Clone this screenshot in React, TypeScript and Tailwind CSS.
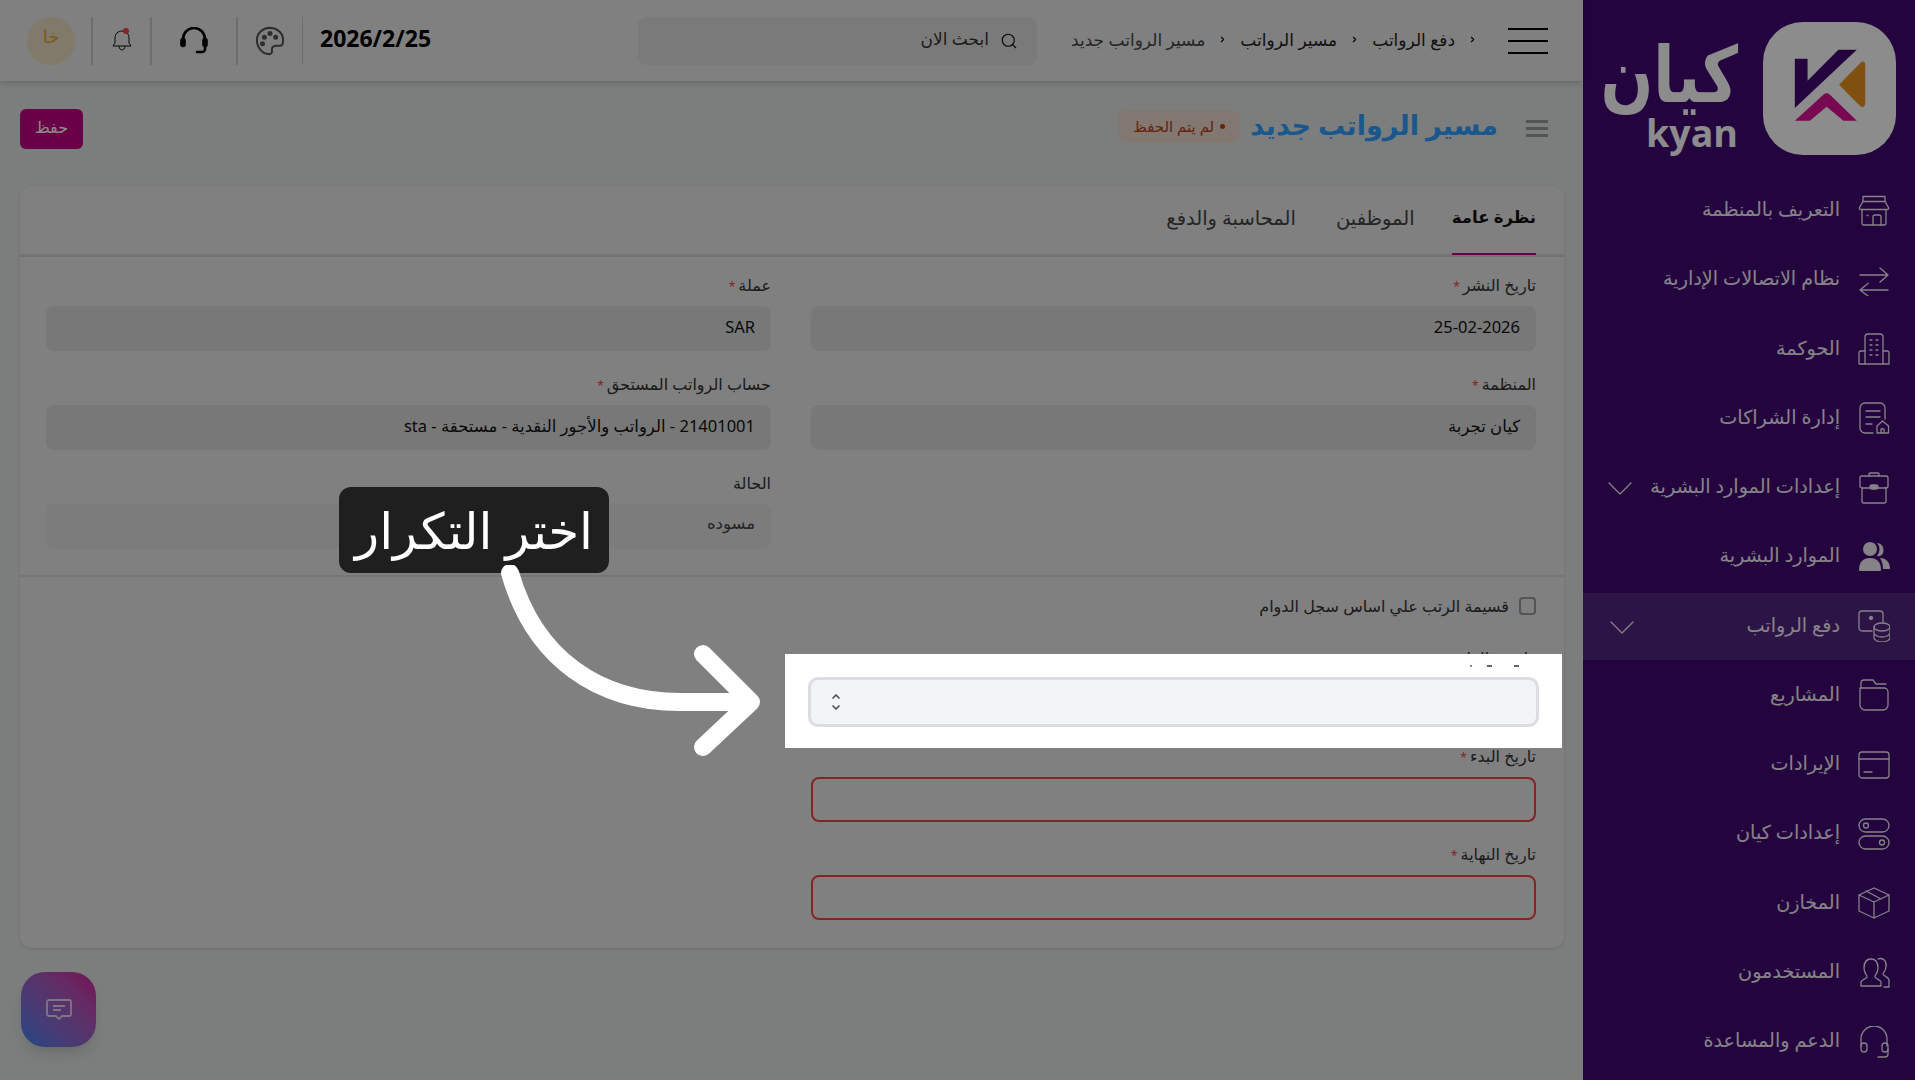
import React from 'react';
import { ChevronRight, Search } from 'lucide-react';

function Ico({ children }: { children: React.ReactNode }) {
  return (
    <svg viewBox="0 0 32 32" className="w-8 h-8 shrink-0 text-[#f2eef4]" fill="none" stroke="currentColor" strokeWidth="1.3" strokeLinecap="round" strokeLinejoin="round">
      {children}
    </svg>
  );
}

const navItems: { label: string; icon: React.ReactNode; chevron?: boolean; active?: boolean }[] = [
  {
    label: 'التعريف بالمنظمة',
    icon: (
      <Ico>
        <path d="M5 1.5h22v5H5z" />
        <path d="M5 6.5 1.5 12.5Q1 14.5 3 14.5H29Q31 14.5 30.5 12.5L27 6.5" />
        <path d="M4 14.5V28a2 2 0 0 0 2 2h20a2 2 0 0 0 2-2V14.5" />
        <path d="M15 30v-8a2 2 0 0 1 2-2h4a2 2 0 0 1 2 2v8M9 20.5h1" />
      </Ico>
    ),
  },
  {
    label: 'نظام الاتصالات الإدارية',
    icon: (
      <Ico>
        <path d="M2 11H30M22 4l8 7-8 7" />
        <path d="M30 26H2M10 19.500l-8 6.500 8 6" />
      </Ico>
    ),
  },
  {
    label: 'الحوكمة',
    icon: (
      <Ico>
        <path d="M7 31V4a3 3 0 0 1 3-3h12a3 3 0 0 1 3 3v27" />
        <path d="M7 18H3a2 2 0 0 0-2 2v11h30V20a2 2 0 0 0-2-2h-4" />
        <path d="M12 7h2M18 7h2M12 12h2M18 12h2M12 17h2M18 17h2M12 22h2M18 22h2" />
      </Ico>
    ),
  },
  {
    label: 'إدارة الشراكات',
    icon: (
      <Ico>
        <path d="M15 31H7a5 5 0 0 1-5-5V6a5 5 0 0 1 5-5h15a5 5 0 0 1 5 5v11" />
        <path d="M8 9h14M8 15h14M8 22h6" />
        <path d="M19 31v-7l5.500-5 6 5v7zM23 31v-4h3v4" />
      </Ico>
    ),
  },
  {
    label: 'إعدادات الموارد البشرية',
    icon: (
      <Ico>
        <path d="M2 6a2 2 0 0 1 2-2h24a2 2 0 0 1 2 2v8a2 2 0 0 1-2 2H4a2 2 0 0 1-2-2z" />
        <path d="M4 16v13a2 2 0 0 0 2 2h20a2 2 0 0 0 2-2V16M11 4V2a1 1 0 0 1 1-1h8a1 1 0 0 1 1 1v2" />
        <rect x="12" y="13" width="8" height="4" rx="2" fill="currentColor" />
      </Ico>
    ),
    chevron: true,
  },
  {
    label: 'الموارد البشرية',
    icon: (
      <svg viewBox="0 0 32 32" className="w-8 h-8 shrink-0 text-[#f2eef4]" fill="currentColor">
        <circle cx="12" cy="8" r="7" />
        <path d="M1 29c0-8 4-12 11-12s11 4 11 12a1 1 0 0 1-1 1H2a1 1 0 0 1-1-1z" />
        <path d="M19 2a7 7 0 0 1 2 13.500l-2-1a9 9 0 0 0 0-12.500zM22 17c6 0 10 4 10 11h-7c0-4-1-8-3-11z" />
      </svg>
    ),
  },
  {
    label: 'دفع الرواتب',
    icon: (
      <Ico>
        <path d="M14 21H4a3 3 0 0 1-3-3V4a3 3 0 0 1 3-3h18a3 3 0 0 1 3 3v8" />
        <circle cx="13" cy="8" r="1.500" fill="currentColor" />
        <ellipse cx="24" cy="17" rx="8" ry="4" />
        <path d="M16 17v11c0 2 4 4 8 4s8-2 8-4V17M16 23c0 2 4 4 8 4s8-2 8-4" />
      </Ico>
    ),
    chevron: true,
    active: true,
  },
  {
    label: 'المشاريع',
    icon: (
      <Ico>
        <path d="M2 9v17a5 5 0 0 0 5 5h18a5 5 0 0 0 5-5V13a4 4 0 0 0-4-4H2zM3 9V4a3 3 0 0 1 3-3h9l3 4h10" />
      </Ico>
    ),
  },
  {
    label: 'الإيرادات',
    icon: (
      <Ico>
        <rect x="1" y="3" width="30" height="26" rx="3" />
        <path d="M1 10h30M6 23h8" />
      </Ico>
    ),
  },
  {
    label: 'إعدادات كيان',
    icon: (
      <Ico>
        <rect x="1" y="1" width="30" height="13" rx="6.500" />
        <rect x="1" y="18" width="30" height="13" rx="6.500" />
        <circle cx="8" cy="7.500" r="2.500" />
        <circle cx="24" cy="24.500" r="2.500" />
      </Ico>
    ),
  },
  {
    label: 'المخازن',
    icon: (
      <Ico>
        <path d="M16 1 31 8v16l-15 7-15-7V8z" />
        <path d="M1 8l15 7 15-7M16 15v16M8 4l15 8" />
      </Ico>
    ),
  },
  {
    label: 'المستخدمون',
    icon: (
      <Ico>
        <path d="M3 30v-4c0-2 5-3 6-5 1-1-3-3-3-9 0-6 3-9 7-9s7 3 7 9c0 6-4 8-3 9 1 2 6 3 6 5v4z" />
        <path d="M20 3c6-2 9 3 8 8-.5 4-3 6-3 7 0 2 6 3 6 6v7h-5" />
      </Ico>
    ),
  },
  {
    label: 'الدعم والمساعدة',
    icon: (
      <Ico>
        <path d="M3 20v-7a13 13 0 0 1 26 0v7" />
        <rect x="3" y="17" width="6" height="9" rx="3" />
        <rect x="24" y="17" width="6" height="9" rx="3" />
        <path d="M30 23v5a3 3 0 0 1-3 3h-7" />
      </Ico>
    ),
  },
];

function Sidebar() {
  return (
    <aside className="w-[332px] h-[1080px] shrink-0 bg-[#430973] flex flex-col">
      <div className="h-[177px] flex items-start gap-[25px] pr-[19px] pt-[22px]">
        <div className="w-[133px] h-[133px] bg-white rounded-[40px] shrink-0">
          <svg viewBox="535 65 397 397" className="w-full h-full">
            <path d="M630 175h38v65l92-92h55L630 322z" fill="#430973" />
            <path d="M830 183q10-2 10 12v112q-2 18-16 8l-62-63z" fill="#e8921c" />
            <path d="M630 360l85-78q10-8 20 0l80 78h-40l-50-42-50 42z" fill="#df1199" />
          </svg>
        </div>
        <div className="flex flex-col items-start text-white font-['DejaVu_Sans',sans-serif] font-bold leading-none">
          <span className="text-[62px] leading-[60px] h-[60px] mt-[15.500px] scale-y-125 origin-top">كيان</span>
          <span className="text-[37.500px] leading-[38px] mt-[16.500px] font-['Open_Sans',sans-serif]">kyan</span>
        </div>
      </div>
      <nav className="flex flex-col gap-[2px]">
        {navItems.map((item) => (
          <div key={item.label} className={`h-[67.25px] flex items-center pr-[25px] pl-[27px] gap-[18px] ${item.active ? 'bg-[#522681]' : ''}`}>
            {item.icon}
            <span className="flex-1 text-[19.200px] text-[#f2eef4] whitespace-nowrap -mt-[2px]">{item.label}</span>
            {item.chevron && (
              <svg viewBox="0 0 24 14" className="w-[24px] h-[14px] shrink-0 mt-[3px] text-[#f2eef4]" fill="none" stroke="currentColor" strokeWidth="1.300" strokeLinecap="round" strokeLinejoin="round">
                <path d="M1 1l11 11L23 1" />
              </svg>
            )}
          </div>
        ))}
      </nav>
    </aside>
  );
}

function TopBar() {
  return (
    <header className="h-[81px] bg-[#e9e9e9] shadow-md flex items-center pr-[35px] pl-[27px] shrink-0">
      <div className="w-[40px] h-[26px] flex flex-col justify-between shrink-0">
        <span className="h-[2px] bg-black" />
        <span className="h-[2px] bg-black" />
        <span className="h-[2px] bg-black" />
      </div>
      <div className="flex items-center gap-[13px] mr-[31px] text-[17px] -mt-[2px] w-[440px] shrink-0">
        <ChevronRight size={9} strokeWidth={3} className="text-black" />
        <span className="text-[#222]">دفع الرواتب</span>
        <ChevronRight size={9} strokeWidth={3} className="text-black" />
        <span className="text-[#222]">مسير الرواتب</span>
        <ChevronRight size={9} strokeWidth={3} className="text-black" />
        <span className="text-[#444]">مسير الرواتب جديد</span>
      </div>
      <div className="w-[399px] h-[48px] bg-[#dedede] rounded-lg flex items-center gap-[11px] pr-[19px] text-[17px] text-[#333]">
        <Search size={18} strokeWidth={1.5} className="text-[#111]" />
        <span className="-mt-[3px]">ابحث الان</span>
      </div>
      <div className="flex-1" />
      <span className="text-[23px] font-bold text-black font-['Open_Sans',sans-serif] -mt-[4px] ml-[17px]" dir="ltr">2026/2/25</span>
      <div className="w-[1px] h-[48px] bg-[#c9c9c9]" />
      <div className="w-[64px] flex justify-center">
        <svg viewBox="0 0 32 32" className="w-[30px] h-[30px]" fill="none" stroke="#555" strokeWidth="2.200">
          <path d="M16 2C8 2 2 8 2 15c0 8 6 15 13 15 4 0 3-3 3-5 0-3 2-4 5-4h4c2 0 3-2 3-6C30 8 24 2 16 2z" />
          <circle cx="10" cy="12" r="1.600" fill="#555" />
          <circle cx="16" cy="8" r="1.600" fill="#555" />
          <circle cx="22" cy="12" r="1.600" fill="#555" />
          <circle cx="8" cy="19" r="1.600" fill="#555" />
        </svg>
      </div>
      <div className="w-[2px] h-[48px] bg-[#c9c9c9]" />
      <div className="w-[84px] flex justify-center">
        <svg viewBox="0 0 28 28" className="w-[28px] h-[28px]" fill="none" stroke="#000" strokeWidth="2.600" strokeLinecap="round">
          <path d="M3 15v-3a11 11 0 0 1 22 0v3" />
          <rect x="1.500" y="12" width="3" height="7" rx="1.500" fill="#000" />
          <rect x="23.500" y="12" width="3" height="7" rx="1.500" fill="#000" />
          <path d="M25 19v3a3 3 0 0 1-3 3h-5" />
        </svg>
      </div>
      <div className="w-[2px] h-[48px] bg-[#c9c9c9]" />
      <div className="w-[57px] flex justify-center">
        <div className="relative w-[20px] h-[24px]">
          <svg viewBox="0 0 20 24" className="w-full h-full" fill="none" stroke="#111" strokeWidth="1">
            <path d="M10 2c-4 0-7 3-7 7v5l-2 3h18l-2-3V9c0-4-3-7-7-7zM7 17c0 3 2 4 3 4s3-1 3-4" />
          </svg>
          <span className="absolute top-[-1px] left-[11px] w-[6px] h-[6px] rounded-full bg-[#ef4444]" />
        </div>
      </div>
      <div className="w-[2px] h-[48px] bg-[#c9c9c9]" />
      <div className="w-[48px] h-[48px] rounded-full bg-[#ecdcc1] text-[#dba93a] text-[18px] flex items-center justify-center mr-[16px] pb-[8px]">خا</div>
    </header>
  );
}

function Label({ text, req }: { text: string; req?: boolean }) {
  return (
    <div className="h-[21px] text-[16px] leading-[21px] text-[#333] mb-[10px]">
      {text}
      {req && <span className="text-[#ef4444] text-[12px] mr-[3px]">*</span>}
    </div>
  );
}

function ReadOnly({ label, value, req, muted }: { label: string; value?: string; req?: boolean; muted?: boolean }) {
  return (
    <div className="flex flex-col">
      <Label text={label} req={req} />
      <div className={`h-[45px] rounded-lg px-[16px] flex items-center text-[16.500px] ${muted ? 'bg-[#e2e2e2] text-[#444] pb-[6px]' : 'bg-[#dadada] text-[#111] pb-[2px]'}`}>{value}</div>
    </div>
  );
}

function Form() {
  return (
    <div className="mt-[12px] mr-[19px] ml-[20px] bg-[#e9e9e9] rounded-xl shadow-sm h-[762px] flex flex-col">
      <div className="h-[71px] border-b-[3px] border-[#d1d1d1] flex items-end gap-[37px] px-[28px] shrink-0">
        <div className="h-[68px] pt-[18px] border-b-2 border-[#c20081] text-[16.500px] font-bold text-[#111] -mb-[1px]">نظرة عامة</div>
        <div className="h-[68px] pt-[17px] text-[19.500px] text-[#444]">الموظفين</div>
        <div className="h-[68px] pt-[17px] mr-[3px] text-[19.500px] text-[#444]">المحاسبة والدفع</div>
      </div>
      <div className="grid grid-cols-2 gap-x-[40px] gap-y-[23px] pr-[28px] pl-[26px] pt-[18px] pb-[26px] border-b-2 border-[#d8d8d8]">
        <ReadOnly label="تاريخ النشر" value="25-02-2026" req />
        <ReadOnly label="عملة" value="SAR" req />
        <ReadOnly label="المنظمة" value="كيان تجربة" req />
        <ReadOnly label="حساب الرواتب المستحق" value="21401001 - الرواتب والأجور النقدية - مستحقة - sta" req />
        <div />
        <ReadOnly label="الحالة" value="مسوده" muted />
      </div>
      <div className="w-[725px] mr-[28px] flex flex-col">
        <label className="flex items-center gap-[10px] h-[18px] mt-[20px] text-[16px] text-[#333]">
          <span className="w-[17px] h-[18px] rounded-[4px] border-2 border-[#999] bg-[#e9e9e9]" />
          قسيمة الرتب علي اساس سجل الدوام
        </label>
        <div className="relative mt-[33px]">
          <Label text="طريقة الراتب" req />
          <div className="h-[45px]" />
          {/* spotlight over the dim layer */}
          <div className="absolute z-20 bg-white top-[6px] -right-[26px] -left-[26px] h-[94px] flex items-center px-[23px]">
            {/* bits of the label that stick out under the spotlight edge */}
            <span className="absolute left-[685px] top-[11px] w-[2px] h-[2px] bg-[#888]" />
            <span className="absolute left-[702px] top-[11px] w-[5px] h-[2px] bg-[#666]" />
            <span className="absolute left-[729px] top-[11px] w-[5px] h-[2px] bg-[#666]" />
            <div className="w-full h-[50px] mt-[1px] rounded-[10px] border-[3px] border-[#dcdde0] bg-[#f3f4f6] flex items-center justify-end pl-[20px]">
              <svg viewBox="0 0 10 18" className="w-[10px] h-[18px]" fill="none" stroke="#4b5563" strokeWidth="1.700" strokeLinecap="round" strokeLinejoin="round">
                <path d="M2 5l3-3 3 3M2 13l3 3 3-3" />
              </svg>
            </div>
          </div>
        </div>
        <div className="mt-[22px]">
          <Label text="تاريخ البدء" req />
          <div className="h-[45px] rounded-lg border-2 border-[#ef4444] bg-[#e9e9e9]" />
        </div>
        <div className="mt-[22px]">
          <Label text="تاريخ النهاية" req />
          <div className="h-[45px] rounded-lg border-2 border-[#ef4444] bg-[#e9e9e9]" />
        </div>
      </div>
    </div>
  );
}

export default function App() {
  return (
    <div dir="rtl" className="relative w-[1915px] h-[1080px] overflow-hidden flex bg-[#e1e5e3] font-['Noto_Sans','DejaVu_Sans',sans-serif]">
      <Sidebar />
      <main className="flex-1 flex flex-col min-w-0">
        <TopBar />
        <div className="h-[74px] mt-[19px] flex items-start shrink-0">
          <div className="flex items-center pr-[35px] h-[50px] w-full">
            <div className="w-[22px] flex flex-col gap-[4px] mt-[7px]">
              <span className="h-[3px] bg-[#999]" />
              <span className="h-[3px] bg-[#999]" />
              <span className="h-[3px] bg-[#999]" />
            </div>
            <h1 className="mr-[28px] text-[27px] font-bold text-[#2f9fff]">مسير الرواتب جديد</h1>
            <div className="mr-[10px] h-[32px] rounded-lg bg-[#eed9d0] px-[15px] flex items-center gap-[6px] text-[15px] text-[#b8400f] mt-[2px]">
              <span className="w-[5px] h-[5px] rounded-full bg-[#b8400f]" />
              لم يتم الحفظ
            </div>
            <div className="flex-1" />
            <button className="w-[63px] h-[40px] ml-[20px] mt-[8px] rounded-md bg-[#c20081] text-white text-[16px] pb-[4px]">حفظ</button>
          </div>
        </div>
        <Form />
        <div className="mt-[24px] mr-auto ml-[21px] w-[75px] h-[75px] rounded-[24px] bg-gradient-to-tr from-[#2f7ff0] to-[#d60f9d] shadow-lg flex items-center justify-center">
          <svg viewBox="0 0 26 22" className="w-[26px] h-[22px]" fill="none" stroke="#fff" strokeWidth="1.800" strokeOpacity="0.75">
            <path d="M3 1h20a2 2 0 0 1 2 2v12a2 2 0 0 1-2 2h-7l-3 3-3-3H3a2 2 0 0 1-2-2V3a2 2 0 0 1 2-2zM7 7h12M7 11h8" />
          </svg>
        </div>
      </main>

      {/* dim layer */}
      <div className="absolute inset-0 bg-black/45 z-10" />

      {/* callout */}
      <div className="absolute z-30 left-[339px] top-[487px] w-[270px] h-[86px] rounded-xl bg-[#1f1f1f] text-white text-[50px] leading-[80px] whitespace-nowrap flex items-center justify-center">
        اختر التكرار
      </div>
      <svg className="absolute z-30 left-[490px] top-[565px]" width="290" height="200" viewBox="490 565 290 200" fill="none" stroke="#fff" strokeWidth="18" strokeLinecap="round" strokeLinejoin="round">
        <path d="M510 573C535 660 600 702 680 702H750" />
        <path d="M703 654 L751 702 L703 747" />
      </svg>
    </div>
  );
}
